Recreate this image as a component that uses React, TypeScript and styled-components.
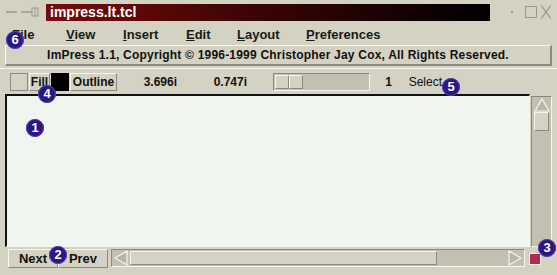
import React from 'react';
import styled, {createGlobalStyle} from 'styled-components';

const chrome = '#d4d2c2';
const light = '#f6f6ee';
const shadow = '#8c8a7c';
const ink = '#000';

const GlobalStyle = createGlobalStyle`
  html, body {
    margin: 0;
    padding: 0;
    background: ${chrome};
  }
  body {
    font-family: "Liberation Sans", Arial, sans-serif;
  }
`;

const Window = styled.div`
  position: relative;
  width: 557px;
  height: 275px;
  background: ${chrome};
  display: flex;
  flex-direction: column;
  overflow: hidden;
`;

const TitleBar = styled.div`
  height: 23px;
  display: flex;
  align-items: center;
  padding: 0 4px 0 6px;
  box-sizing: border-box;
`;

const TitleTools = styled.div`
  width: 40px;
  display: flex;
  align-items: center;
`;

const TitleBox = styled.div`
  flex: 0 0 444px;
  height: 17px;
  margin-top: 1px;
  background: linear-gradient(90deg, #7a0a0a 0%, #3c0505 45%, #000 100%);
  color: #fff;
  font-weight: bold;
  font-size: 14px;
  line-height: 17px;
  padding-left: 4px;
  box-sizing: border-box;
`;

const WindowButtons = styled.div`
  flex: 1;
  display: flex;
  justify-content: flex-end;
  align-items: center;
  padding-right: 2px;
`;

const MenuBar = styled.div`
  height: 22px;
  display: flex;
  align-items: center;
  padding-left: 12px;
  font-size: 13px;
  font-weight: bold;
`;

const MenuItem = styled.div<{ $w?: number }>`
  width: ${p => (p.$w ? `${p.$w}px` : 'auto')};
  color: #1a1a1a;
  u {
    text-decoration: underline;
  }
`;

const Banner = styled.div`
  margin: 0 5px;
  height: 21px;
  border-top: 1px solid ${light};
  border-left: 1px solid ${light};
  border-right: 2px solid ${shadow};
  border-bottom: 2px solid ${shadow};
  box-sizing: border-box;
  display: flex;
  align-items: center;
  justify-content: center;
  font-size: 12px;
  font-weight: bold;
  letter-spacing: 0.2px;
  color: #111;
`;

const ToolBar = styled.div`
  height: 26px;
  margin-top: 2px;
  border-top: 1px solid ${light};
  display: flex;
  align-items: center;
  padding-left: 10px;
  box-sizing: border-box;
  font-size: 12px;
  font-weight: bold;
`;

const Swatch = styled.div<{ $color: string; $w: number }>`
  width: ${p => p.$w}px;
  height: 18px;
  background: ${p => p.$color};
  box-sizing: border-box;
  border: 1px solid ${p => (p.$color === ink ? ink : shadow)};
`;

const ToolButton = styled.div<{ $w: number }>`
  width: ${p => p.$w}px;
  height: 18px;
  margin: 0 1px;
  border: 1px solid;
  border-color: ${light} ${shadow} ${shadow} ${light};
  box-sizing: border-box;
  display: flex;
  align-items: center;
  justify-content: center;
  color: #111;
`;

const Readout = styled.div<{ $w: number; $bold?: boolean }>`
  width: ${p => p.$w}px;
  text-align: right;
  font-weight: ${p => (p.$bold === false ? 'normal' : 'bold')};
  color: #111;
`;

const Slider = styled.div`
  width: 97px;
  height: 18px;
  margin-left: 26px;
  background: #c2c0b0;
  border: 1px solid;
  border-color: ${shadow} ${light} ${light} ${shadow};
  box-sizing: border-box;
  display: flex;
  padding: 1px;
`;

const Thumb = styled.div`
  width: 28px;
  display: flex;
  span {
    flex: 1;
    background: ${chrome};
    border: 1px solid;
    border-color: ${light} ${shadow} ${shadow} ${light};
  }
`;

const Workspace = styled.div`
  height: 153px;
  display: flex;
  padding: 0 5px;
  gap: 1px;
`;

const Canvas = styled.div`
  flex: 1;
  background: #f1f5ef;
  border-top: 2px solid #111;
  border-left: 2px solid #111;
  border-right: 1px solid ${light};
  border-bottom: 1px solid ${light};
`;

const VScroll = styled.div`
  width: 19px;
  margin-top: 2px;
  background: #c2c0b0;
  border: 1px solid;
  border-color: ${shadow} ${light} ${light} ${shadow};
  display: flex;
  flex-direction: column;
  align-items: center;
  padding-top: 1px;
`;

const VThumb = styled.div`
  width: 15px;
  height: 19px;
  background: ${chrome};
  border: 1px solid;
  border-color: ${light} ${shadow} ${shadow} ${light};
  box-sizing: border-box;
`;

const BottomRow = styled.div`
  height: 22px;
  display: flex;
  align-items: center;
  padding-left: 8px;
  font-size: 13px;
  font-weight: bold;
`;

const NavButton = styled.div<{ $w: number }>`
  width: ${p => p.$w}px;
  height: 19px;
  box-sizing: border-box;
  border: 1px solid;
  border-color: ${light} ${shadow} ${shadow} ${light};
  display: flex;
  align-items: center;
  justify-content: center;
  color: #111;
`;

const HScroll = styled.div`
  width: 414px;
  height: 18px;
  margin-left: 3px;
  background: #c2c0b0;
  border: 1px solid;
  border-color: ${shadow} ${light} ${light} ${shadow};
  box-sizing: border-box;
  display: flex;
  align-items: center;
  padding: 0 2px;
  gap: 2px;
`;

const HThumb = styled.div`
  width: 307px;
  height: 14px;
  background: ${chrome};
  border: 1px solid;
  border-color: ${light} ${shadow} ${shadow} ${light};
  box-sizing: border-box;
`;

const Spacer = styled.div`
  flex: 1;
`;

const Corner = styled.div`
  width: 10px;
  height: 10px;
  margin-left: 4px;
  margin-top: 2px;
  background: #b02c54;
  border: 1px solid ${light};
`;

const Callout = styled.div<{ $x: number; $y: number }>`
  position: absolute;
  left: ${p => p.$x - 9}px;
  top: ${p => p.$y - 9}px;
  width: 18px;
  height: 18px;
  border-radius: 50%;
  background: #2c1686;
  box-shadow: 0 0 0 1px #5848a8 inset;
  color: #fff;
  font-weight: bold;
  font-size: 13px;
  line-height: 18px;
  text-align: center;
`;

const Arrow: React.FC<{ dir: 'left' | 'right' | 'up' }> = ({dir}) => {
    const pts = {
        left: '13,1 13,15 1,8',
        right: '1,1 1,15 13,8',
        up: '1,13 15,13 8,1',
    }[dir];
    return (
        <svg width={dir === 'up' ? 16 : 14} height={dir === 'up' ? 14 : 16}>
            <polygon points={pts} fill="#b8b6a6" stroke={light} strokeWidth={1.2}/>
        </svg>
    );
};

const callouts = [
    {n: 1, x: 35, y: 128},
    {n: 2, x: 58, y: 255},
    {n: 3, x: 547, y: 248},
    {n: 4, x: 47, y: 94},
    {n: 5, x: 451, y: 87},
    {n: 6, x: 15, y: 40},
];

export default function App() {
    return (
        <Window>
            <GlobalStyle/>
            <TitleBar>
                <TitleTools>
                    <svg width="34" height="10">
                        <line x1="0" y1="5" x2="11" y2="5" stroke="#9a988a" strokeWidth="1.5"/>
                        <line x1="15" y1="5" x2="26" y2="5" stroke="#9a988a" strokeWidth="1.5"/>
                        <rect x="26" y="1" width="6" height="8" fill="none" stroke="#9a988a"/>
                        <line x1="29" y1="1" x2="29" y2="9" stroke="#9a988a"/>
                    </svg>
                </TitleTools>
                <TitleBox>impress.lt.tcl</TitleBox>
                <WindowButtons>
                    <svg width="50" height="16">
                        <rect x="10" y="7" width="2" height="2" fill="#9a988a"/>
                        <rect x="24.5" y="2.5" width="11" height="11" fill="none" stroke="#9a988a"/>
                        <line x1="40" y1="1" x2="50" y2="15" stroke="#9a988a" strokeWidth="1.2"/>
                        <line x1="50" y1="1" x2="40" y2="15" stroke="#9a988a" strokeWidth="1.2"/>
                    </svg>
                </WindowButtons>
            </TitleBar>

            <MenuBar>
                <MenuItem $w={54}><u>F</u>ile</MenuItem>
                <MenuItem $w={57}><u>V</u>iew</MenuItem>
                <MenuItem $w={63}><u>I</u>nsert</MenuItem>
                <MenuItem $w={51}><u>E</u>dit</MenuItem>
                <MenuItem $w={69}><u>L</u>ayout</MenuItem>
                <MenuItem><u>P</u>references</MenuItem>
            </MenuBar>

            <Banner>ImPress 1.1, Copyright © 1996-1999 Christopher Jay Cox, All Rights Reserved.</Banner>

            <ToolBar>
                <Swatch $color={chrome} $w={18}/>
                <ToolButton $w={21}>Fill</ToolButton>
                <Swatch $color={ink} $w={18}/>
                <ToolButton $w={47}>Outline</ToolButton>
                <Readout $w={59}>3.696i</Readout>
                <Readout $w={70}>0.747i</Readout>
                <Slider>
                    <Thumb><span/><span/></Thumb>
                </Slider>
                <Readout $w={22}>1</Readout>
                <Readout $w={50} $bold={false}>Select</Readout>
            </ToolBar>

            <Workspace>
                <Canvas/>
                <VScroll>
                    <Arrow dir="up"/>
                    <VThumb/>
                </VScroll>
            </Workspace>

            <BottomRow>
                <NavButton $w={50}>Next</NavButton>
                <NavButton $w={50}>Prev</NavButton>
                <HScroll>
                    <Arrow dir="left"/>
                    <HThumb/>
                    <Spacer/>
                    <Arrow dir="right"/>
                </HScroll>
                <Corner/>
            </BottomRow>

            {callouts.map(c => (
                <Callout key={c.n} $x={c.x} $y={c.y}>{c.n}</Callout>
            ))}
        </Window>
    );
}
